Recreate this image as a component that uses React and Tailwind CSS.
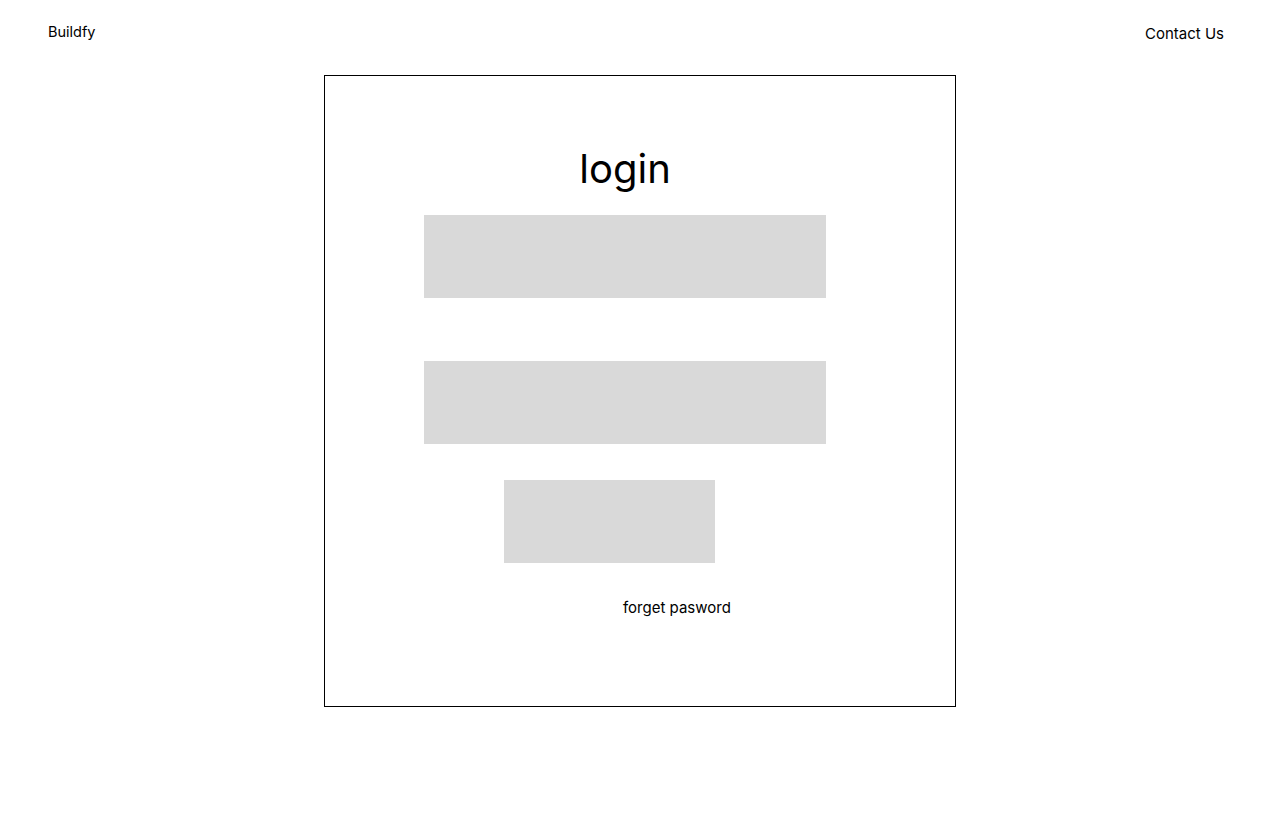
export default function App() {
  return (
    <div className="min-h-screen w-full bg-white text-black font-['Inter',sans-serif]">
      {/* header */}
      <header className="flex items-start justify-between pl-[48px] pr-[56px]">
        <span className="mt-[22px] text-[14.5px] leading-[20px]">Buildfy</span>
        <span className="mt-[24px] text-[15px] leading-[20px]">Contact Us</span>
      </header>

      {/* login card */}
      <div className="mx-auto mt-[31px] h-[632px] w-[632px] border border-black">
        <div className="ml-[99px] flex w-[402px] flex-col">
          <h1 className="mt-[69px] h-[48px] text-center text-[40px] font-normal leading-[48px]">
            login
          </h1>
          <div className="mt-[22px] h-[83px] w-[402px] bg-[#d9d9d9]" />
          <div className="mt-[63px] h-[83px] w-[402px] bg-[#d9d9d9]" />
          <button className="ml-[80px] mt-[36px] h-[83px] w-[211px] bg-[#d9d9d9]" />
          <a className="ml-[199px] mt-[35px] text-[15px] leading-[20px]">forget pasword</a>
        </div>
      </div>
    </div>
  );
}
